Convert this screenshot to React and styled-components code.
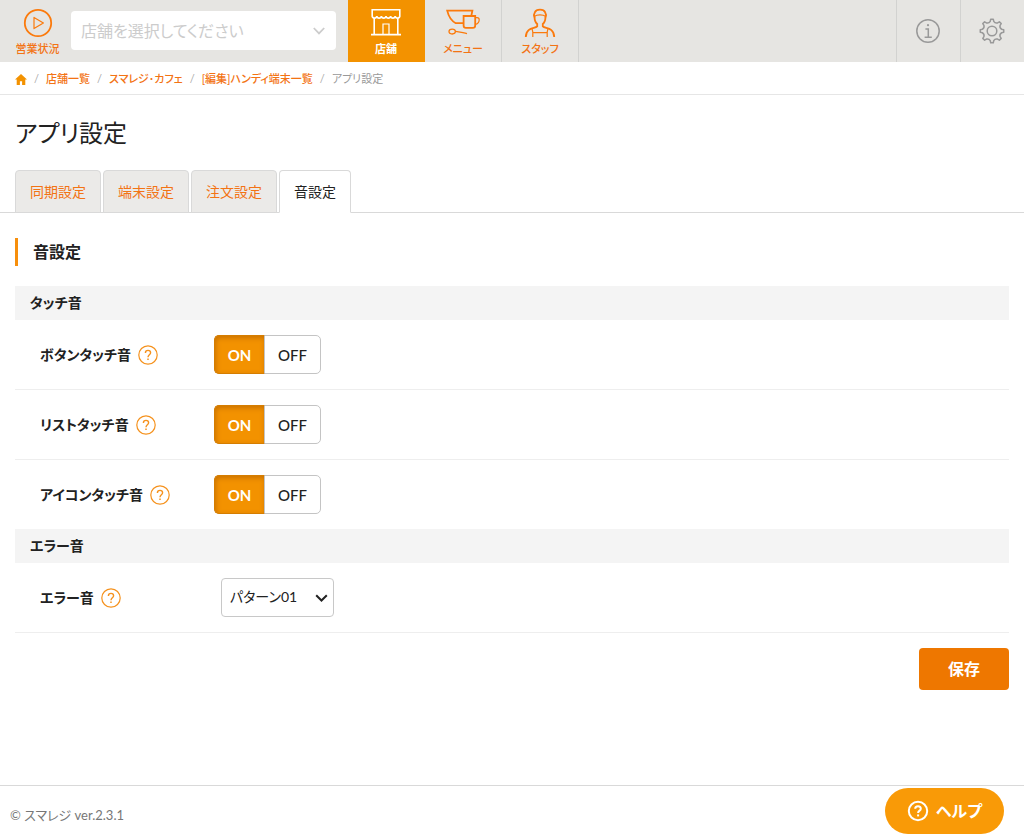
import { useState } from 'react';
import styled, { createGlobalStyle, css } from 'styled-components';

const COLOR = {
  TEXT: '#222222',
  LINK: '#f37314',
  ICON: '#fb7a0c',
  ORANGE: '#f39200',
  ORANGE_DARK: '#ee7700',
  HEADER: '#e6e5e2',
  BORDER: '#d9d9d9',
  GRAY: '#999999',
};

const NAV = [
  { title: '店舗', Icon: ShopIcon, active: true },
  { title: 'メニュー', Icon: MenuIcon },
  { title: 'スタッフ', Icon: StaffIcon },
];

const BREADCRUMBS = ['店舗一覧', 'スマレジ･カフェ', '[編集]ハンディ端末一覧'];

const TABS = ['同期設定', '端末設定', '注文設定', '音設定'];

const TOUCH_SOUNDS = [
  { name: 'button', title: 'ボタンタッチ音' },
  { name: 'list', title: 'リストタッチ音' },
  { name: 'icon', title: 'アイコンタッチ音' },
];

export default function App() {
  return (
    <Page>
      <GlobalStyle />
      <Header />
      <Breadcrumbs />
      <Main>
        <PageTitle>アプリ設定</PageTitle>
        <Tabs>
          {TABS.map((title) => (
            <Tab key={title} href="#" $active={title === '音設定'}>
              {title}
            </Tab>
          ))}
        </Tabs>
        <Form onSubmit={(e) => e.preventDefault()}>
          <SectionTitle>音設定</SectionTitle>
          <GroupTitle>タッチ音</GroupTitle>
          {TOUCH_SOUNDS.map(({ name, title }) => (
            <ToggleRow key={name} name={name} title={title} />
          ))}
          <GroupTitle>エラー音</GroupTitle>
          <Row>
            <RowLabel>
              <label htmlFor="error-sound">エラー音</label>
              <Help />
            </RowLabel>
            <PatternBox>
              <PatternSelect id="error-sound">
                <option>パターン01</option>
                <option>パターン02</option>
                <option>パターン03</option>
              </PatternSelect>
              <Chevron $right={6} width="13" height="8" viewBox="0 0 13 8">
                <path d="M1.2 1.2l5.3 5.3 5.3-5.3" stroke={COLOR.TEXT} strokeWidth="2" />
              </Chevron>
            </PatternBox>
          </Row>
          <Actions>
            <SaveButton type="submit">保存</SaveButton>
          </Actions>
        </Form>
      </Main>
      <Footer>© スマレジ ver.2.3.1</Footer>
      <HelpButton type="button">
        <svg width="22" height="22" viewBox="0 0 22 22" fill="none" stroke="currentColor" strokeWidth="2">
          <circle cx="11" cy="11" r="9.2" />
          <path d="M8.2 8.8c0-1.6 1.2-2.6 2.8-2.6s2.8 1 2.8 2.5c0 1.9-2.7 2-2.7 4.2" />
          <path d="M11.1 14.4v2" />
        </svg>
        ヘルプ
      </HelpButton>
    </Page>
  );
}

function Header() {
  return (
    <HeaderBar>
      <StatusLink href="#">
        <svg width="30" height="30" viewBox="0 0 30 30" fill="none" stroke={COLOR.ICON}>
          <circle cx="15" cy="15" r="13.2" strokeWidth="1.8" />
          <path d="M11 9.4l9.4 5.6-9.4 5.6z" strokeWidth="1.2" strokeLinejoin="round" />
        </svg>
        営業状況
      </StatusLink>
      <StoreBox>
        <StoreSelect aria-label="店舗" defaultValue="">
          <option value="">店舗を選択してください</option>
        </StoreSelect>
        <Chevron $right={11} width="12" height="8" viewBox="0 0 12 8">
          <path d="M.8 1l5.2 5.4L11.2 1" stroke="#cccccc" strokeWidth="1.8" />
        </Chevron>
      </StoreBox>
      <Nav>
        {NAV.map(({ title, Icon, active }) => (
          <NavLink key={title} href="#" $active={active}>
            <Icon />
            {title}
          </NavLink>
        ))}
      </Nav>
      <Tools>
        <ToolButton type="button" aria-label="情報">
          <svg width="26" height="26" viewBox="0 0 26 26" fill="none" stroke="currentColor" strokeWidth="1.5">
            <circle cx="13" cy="13" r="11.2" />
            <path d="M10.4 11h2.9v8M9.6 19.3h7.2" />
            <circle cx="13" cy="7.2" r="1.1" fill="currentColor" stroke="none" />
          </svg>
        </ToolButton>
        <ToolButton type="button" aria-label="設定">
          <svg width="26" height="26" viewBox="0 0 26 26" fill="none" stroke="currentColor" strokeWidth="1.5">
            <path d={gearPath(13, 8)} strokeLinejoin="round" />
            <circle cx="13" cy="13" r="4.8" />
          </svg>
        </ToolButton>
      </Tools>
    </HeaderBar>
  );
}

function Breadcrumbs() {
  return (
    <Crumbs>
      <HomeLink href="#" aria-label="ホーム">
        <svg width="12" height="11" viewBox="0 0 12 11" fill="currentColor">
          <path d="M6 0l6 5.6h-1.7V11H7.1V7.2H4.9V11H1.7V5.6H0z" />
        </svg>
      </HomeLink>
      {BREADCRUMBS.map((title) => (
        <Crumb key={title}>
          <a href="#">{title}</a>
        </Crumb>
      ))}
      <Crumb>アプリ設定</Crumb>
    </Crumbs>
  );
}

function ToggleRow({ name, title }) {
  const [value, setValue] = useState('ON');
  return (
    <Row>
      <RowLabel>
        <span>{title}</span>
        <Help />
      </RowLabel>
      <Toggle role="radiogroup" aria-label={title}>
        {['ON', 'OFF'].map((option) => (
          <ToggleOption key={option} $checked={value === option}>
            <input type="radio" name={name} checked={value === option} onChange={() => setValue(option)} />
            {option}
          </ToggleOption>
        ))}
      </Toggle>
    </Row>
  );
}

function Help() {
  return (
    <HelpIcon width="20" height="20" viewBox="0 0 20 20">
      <circle cx="10" cy="10" r="9.2" strokeWidth="1.2" />
      <path d="M7.4 7.9c0-1.6 1.1-2.5 2.6-2.5s2.6.9 2.6 2.4c0 2-2.6 2.1-2.6 4.4" strokeWidth="1.4" />
      <path d="M10 13.5v1.5" strokeWidth="1.5" />
    </HelpIcon>
  );
}

function ShopIcon() {
  return (
    <svg width="32" height="28" viewBox="0 0 32 28" fill="none" stroke="#ffffff" strokeWidth="1.6">
      <path d="M2.2 8.4V1.8h27.6v6.6" />
      <path d="M2.2 8.2c.4 2.6 4.2 2.6 4.6 0 .4 2.6 4.2 2.6 4.6 0 .4 2.6 4.2 2.6 4.6 0 .4 2.6 4.2 2.6 4.6 0 .4 2.6 4.2 2.6 4.6 0 .4 2.6 4.2 2.6 4.6 0" />
      <path d="M4.2 10v16.2M27.8 10v16.2M1 26.6h30" />
      <path d="M13 26V16h6v10" strokeWidth="1.2" />
    </svg>
  );
}

function MenuIcon() {
  return (
    <svg width="36" height="28" viewBox="0 0 36 28" fill="none" stroke={COLOR.ICON} strokeWidth="1.8">
      <path d="M18 15.2h-7.2C5.6 12.4 3.4 7.6 2.2 2.6h25.2l-1 4.8" />
      <path d="M18.6 8h11.6v9.4c0 1.6-.8 2.4-2.4 2.4H21c-1.6 0-2.4-.8-2.4-2.4z" />
      <path d="M30.6 9.6h1.6c1.4 0 2 .8 2 2.2 0 2.4-1.4 4-3.6 4.6" strokeWidth="1.2" />
      <ellipse cx="7.2" cy="23.6" rx="3.2" ry="2.4" strokeWidth="1.3" />
      <path d="M10.4 23.4c4 .2 7.4 1.4 11.6 2.2" strokeWidth="1.3" />
    </svg>
  );
}

function StaffIcon() {
  return (
    <svg width="32" height="30" viewBox="0 0 32 30" fill="none" stroke={COLOR.ICON} strokeWidth="1.8">
      <path d="M10.4 9.2c-.6-1.4-.6-3.2.4-4.8 1.6-3.6 8.8-3.6 10.4 0 1 1.6 1 3.4.4 4.8" />
      <path d="M10.2 8.4c2.8-2 8.8-2 11.6 0" strokeWidth="1.2" />
      <path d="M10.6 8.8c-.2 3.6 1 5.8 2.6 7.2v2.4C11 21 2.2 18.8 1.8 29M21.4 8.8c.2 3.6-1 5.8-2.6 7.2v2.4c2.2 2.6 11 .4 11.4 10.6" />
      <path d="M8 20.2c.2 1.8.8 3 .8 4.4V29M24 20.2c-.2 1.8-.8 3-.8 4.4V29M8.8 24.6h14.4" strokeWidth="1.2" />
    </svg>
  );
}

// outline of a cog: flat teeth joined by rounded hollows
function gearPath(center, teeth) {
  const step = (2 * Math.PI) / teeth;
  const point = (angle, radius) =>
    `${(center + radius * Math.sin(angle)).toFixed(2)} ${(center - radius * Math.cos(angle)).toFixed(2)}`;
  let path = '';
  for (let i = 0; i < teeth; i++) {
    const angle = i * step;
    path += `${i ? 'L' : 'M'}${point(angle - 0.18, 9.8)}`;
    path += `L${point(angle - 0.11, 11.8)}L${point(angle + 0.11, 11.8)}`;
    path += `L${point(angle + 0.18, 9.8)}`;
    path += `Q${point(angle + step / 2, 8)} ${point(angle + step - 0.18, 9.8)}`;
  }
  return `${path}Z`;
}

const GlobalStyle = createGlobalStyle`
  *, *::before, *::after {
    box-sizing: border-box;
  }
  body {
    margin: 0;
    background: #ffffff;
    color: ${COLOR.TEXT};
    font-family: Lato, 'Noto Sans CJK JP', sans-serif;
    font-size: 14px;
    line-height: 20px;
    font-feature-settings: 'palt';
  }
  a {
    color: ${COLOR.LINK};
    text-decoration: none;
  }
  button, select, input {
    font: inherit;
    font-feature-settings: inherit;
  }
  svg {
    display: block;
    flex: none;
  }
`;
const Page = styled.div`
  display: flex;
  flex-direction: column;
  min-height: 100vh;
`;
const HeaderBar = styled.header`
  display: flex;
  height: 62px;
  background: ${COLOR.HEADER};
`;
const headerItem = css`
  display: flex;
  flex-direction: column;
  align-items: center;
  justify-content: space-between;
  padding: 8px 0 5px;
  font-size: 11px;
  font-weight: 500;
  line-height: 16px;
  white-space: nowrap;
`;
const StatusLink = styled.a`
  ${headerItem}
  width: 45px;
  margin: 0 11px 0 15px;
`;
const StoreBox = styled.div`
  position: relative;
  flex: 0 1 265px;
  align-self: flex-start;
  margin: 11px 12px 0 0;
`;
const selectBase = css`
  display: block;
  width: 100%;
  height: 39px;
  border-radius: 4px;
  background: #ffffff;
  appearance: none;
`;
const StoreSelect = styled.select`
  ${selectBase}
  padding: 0 32px 0 10px;
  border: 0;
  color: #cccccc;
  font-size: 16px;
`;
const Chevron = styled.svg`
  position: absolute;
  top: 50%;
  right: ${({ $right }) => $right}px;
  transform: translateY(-50%);
  fill: none;
  pointer-events: none;
`;
const Nav = styled.nav`
  display: flex;
`;
const NavLink = styled.a`
  ${headerItem}
  width: 77px;
  border-right: 1px solid #d2d2d0;
  ${({ $active }) =>
    $active &&
    css`
      border-color: ${COLOR.ORANGE};
      background: ${COLOR.ORANGE};
      color: #ffffff;
      font-weight: 700;
    `}
`;
const Tools = styled.div`
  display: flex;
  margin-left: auto;
`;
const ToolButton = styled.button`
  display: flex;
  align-items: center;
  justify-content: center;
  width: 64px;
  padding: 0 2px 0 0;
  border: 0;
  border-left: 1px solid #d2d2d0;
  background: none;
  color: ${COLOR.GRAY};
`;
const Crumbs = styled.nav`
  display: flex;
  align-items: center;
  height: 33px;
  padding: 2px 15px 0;
  border-bottom: 1px solid #e6e6e6;
  font-size: 11px;
`;
const HomeLink = styled.a`
  color: ${COLOR.ORANGE};
`;
const Crumb = styled.span`
  color: ${COLOR.GRAY};
  white-space: nowrap;
  &::before {
    content: '/';
    padding: 0 7px;
    color: #aaaaaa;
  }
  a {
    font-weight: 500;
  }
`;
const Main = styled.main`
  flex: 1;
`;
const PageTitle = styled.h1`
  margin: 20px 15px 19px;
  font-size: 24px;
  font-weight: 400;
  line-height: 36px;
`;
const Tabs = styled.nav`
  display: flex;
  gap: 2px;
  padding: 0 15px;
  border-bottom: 1px solid ${COLOR.BORDER};
`;
const Tab = styled.a`
  margin-bottom: -1px;
  padding: 11px 14px 10px;
  border: 1px solid ${COLOR.BORDER};
  border-radius: 4px 4px 0 0;
  background: ${({ $active }) => ($active ? '#ffffff' : '#ebeae8')};
  color: ${({ $active }) => ($active ? COLOR.TEXT : COLOR.LINK)};
  border-bottom-color: ${({ $active }) => ($active ? '#ffffff' : COLOR.BORDER)};
`;
const Form = styled.form`
  padding: 25px 15px;
`;
const SectionTitle = styled.h2`
  margin: 0 0 20px;
  padding-left: 15px;
  border-left: 3px solid #f78f0c;
  font-size: 16px;
  font-weight: 700;
  line-height: 28px;
`;
const GroupTitle = styled.h3`
  margin: 0;
  padding: 0 15px;
  background: #f4f4f4;
  font-size: 14px;
  font-weight: 700;
  line-height: 34px;
`;
const Row = styled.div`
  display: flex;
  align-items: center;
  height: 70px;
  padding-left: 25px;
  border-bottom: 1px solid #eeeeee;
  &:has(+ h3) {
    height: 69px;
    border-bottom: 0;
  }
`;
const RowLabel = styled.div`
  display: flex;
  align-items: center;
  gap: 7px;
  width: 174px;
  font-weight: 700;
`;
const HelpIcon = styled.svg`
  fill: none;
  stroke: #f5921e;
`;
const Toggle = styled.div`
  display: flex;
  width: 107px;
  height: 39px;
  border: 1px solid #c4c4c4;
  border-radius: 5px;
`;
const ToggleOption = styled.label`
  display: flex;
  flex: 1;
  align-items: center;
  justify-content: center;
  font-size: 15px;
  font-weight: 500;
  cursor: pointer;
  input {
    position: absolute;
    opacity: 0;
    pointer-events: none;
  }
  &:first-child {
    flex: 0 0 51px;
  }
  ${({ $checked }) =>
    $checked &&
    css`
      margin: -1px 0 -1px -1px;
      border: 1px solid #d57d00;
      border-right-color: #c4c4c4;
      border-radius: 5px 0 0 5px;
      background: ${COLOR.ORANGE};
      box-shadow: inset 1px 2px 5px rgba(150, 75, 0, 0.45);
      color: #ffffff;
      font-weight: 700;
    `}
`;
const PatternBox = styled.div`
  position: relative;
  width: 113px;
  margin-left: 7px;
`;
const PatternSelect = styled.select`
  ${selectBase}
  padding: 0 24px 2px 8px;
  border: 1px solid #c8c8c8;
  color: ${COLOR.TEXT};
`;
const Actions = styled.div`
  display: flex;
  justify-content: flex-end;
  padding-top: 15px;
`;
const SaveButton = styled.button`
  width: 90px;
  height: 42px;
  border: 0;
  border-radius: 4px;
  background: ${COLOR.ORANGE_DARK};
  color: #ffffff;
  font-size: 16px;
  font-weight: 700;
`;
const Footer = styled.footer`
  padding: 19px 10px 14px;
  border-top: 1px solid ${COLOR.BORDER};
  color: #777777;
  font-size: 13px;
`;
const HelpButton = styled.button`
  position: fixed;
  right: 20px;
  bottom: 5px;
  display: flex;
  align-items: center;
  justify-content: center;
  gap: 7px;
  width: 119px;
  height: 46px;
  border: 0;
  border-radius: 23px;
  background: #f99a07;
  color: #ffffff;
  font-size: 16px;
  font-weight: 700;
`;
